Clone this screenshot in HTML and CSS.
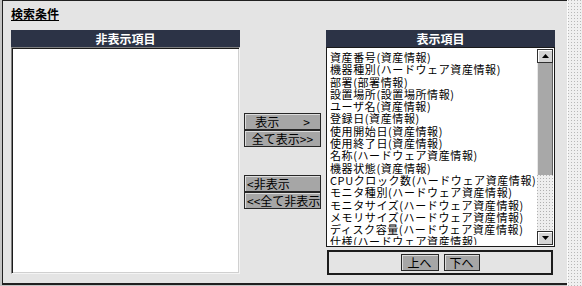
FILE: index.html
```html
<!DOCTYPE html>
<html>
  <head>
    <meta charset="UTF-8" />
    <title>検索条件</title>
    <link rel="stylesheet" href="styles.css">
  </head>
  <body>
    <div class="frame">
      <div class="title">検索条件</div>

      <div class="panels">
        <div class="panel">
          <div class="panel-head">非表示項目</div>
          <div class="listbox hidden-list"></div>
        </div>

        <div class="moves">
          <button class="btn move">表示　　&gt;</button>
          <button class="btn move">全て表示&gt;&gt;</button>
          <button class="btn move back first-back">&lt;非表示</button>
          <button class="btn move back">&lt;&lt;全て非表示</button>
        </div>

        <div class="panel">
          <div class="panel-head">表示項目</div>
          <div class="listbox shown-list">
            <ul class="items">
              <li>資産番号(資産情報)</li>
              <li>機器種別(ハードウェア資産情報)</li>
              <li>部署(部署情報)</li>
              <li>設置場所(設置場所情報)</li>
              <li>ユーザ名(資産情報)</li>
              <li>登録日(資産情報)</li>
              <li>使用開始日(資産情報)</li>
              <li>使用終了日(資産情報)</li>
              <li>名称(ハードウェア資産情報)</li>
              <li>機器状態(資産情報)</li>
              <li>CPUクロック数(ハードウェア資産情報)</li>
              <li>モニタ種別(ハードウェア資産情報)</li>
              <li>モニタサイズ(ハードウェア資産情報)</li>
              <li>メモリサイズ(ハードウェア資産情報)</li>
              <li>ディスク容量(ハードウェア資産情報)</li>
              <li>仕様(ハードウェア資産情報)</li>
            </ul>
            <div class="scrollbar">
              <div class="sb-btn">
                <svg width="7" height="4" viewBox="0 0 7 4"><polygon points="3.5,0 7,4 0,4" fill="#000"/></svg>
              </div>
              <div class="sb-thumb"></div>
              <div class="sb-track"></div>
              <div class="sb-btn">
                <svg width="7" height="4" viewBox="0 0 7 4"><polygon points="0,0 7,0 3.5,4" fill="#000"/></svg>
              </div>
            </div>
          </div>
          <div class="order-bar">
            <button class="btn order up">上へ</button>
            <button class="btn order">下へ</button>
          </div>
        </div>
      </div>
    </div>

    <div class="side"></div>
  </body>
</html>
```

FILE: styles.css
```css
body {
  margin: 0;
  display: flex;
  height: 286px;
  overflow: hidden;
  background-color: #c4c4c4;
  font-family: "Noto Sans CJK JP", sans-serif;
  font-size: 12px;
  color: #000;
}

.frame {
  flex: 1;
  height: 285px;
  box-sizing: border-box;
  margin-left: 2px;
  padding: 6px 0 0 8px;
  background-color: #e4e4e4;
  border-top: 1px solid #202020;
  border-left: 1px solid #202020;
  border-bottom: 2px solid #202020;
}

.side {
  width: 14px;
  border-left: 1px solid #fafafa;
  background: conic-gradient(at 1px 1px, transparent 75%, #b8b8b8 0) 0 0 / 3px 3px,
    #f0f0f0;
}

.title {
  font-weight: bold;
  text-decoration: underline;
  line-height: 14px;
  margin-bottom: 9px;
}

.panels {
  display: flex;
}

.panel {
  width: 229px;
  display: flex;
  flex-direction: column;
}

.panel-head {
  height: 17px;
  line-height: 17px;
  background-color: #2c3346;
  color: #fff;
  font-weight: bold;
  text-align: center;
}

.listbox {
  box-sizing: border-box;
  background-color: #fff;
  border: 1px solid;
  border-color: #808080 #f4f4f4 #f4f4f4 #808080;
  box-shadow: inset 1px 1px #1a1a1a, inset -1px -1px #d0d0d0;
}

.hidden-list {
  height: 227px;
}

.shown-list {
  height: 200px;
  display: flex;
  padding: 1px;
  border-color: #1a1a1a;
  box-shadow: none;
}

.items {
  flex: 1;
  margin: 0;
  padding: 2px 2px 0 2px;
  list-style: none;
  overflow: hidden;
  white-space: nowrap;
  font-size: 11px;
  line-height: 12.3px;
  letter-spacing: 0.6px;
}

.scrollbar {
  width: 16px;
  display: flex;
  flex-direction: column;
}

.sb-btn {
  height: 14px;
  box-sizing: border-box;
  display: flex;
  align-items: center;
  justify-content: center;
  background-color: #d4d4d4;
  border: 1px solid #303030;
  box-shadow: inset 1px 1px #fff;
}

.sb-thumb {
  height: 112px;
  background-color: #a8a8a8;
  border-left: 1px solid #e8e8e8;
  border-right: 1px solid #606060;
}

.sb-track {
  flex: 1;
  background: conic-gradient(at 1px 1px, transparent 75%, #b0b0b0 0) 0 0 / 3px 3px,
    #eeeeee;
}

.moves {
  width: 77px;
  margin: 0 5px 0 4px;
  padding-top: 83px;
  display: flex;
  flex-direction: column;
}

.btn {
  height: 17px;
  padding: 0;
  font-family: inherit;
  font-size: 12px;
  line-height: 15px;
  color: #000;
  white-space: pre;
  background-color: #a6a6a6;
  border: 1px solid #262626;
  box-shadow: inset 1px 1px #dcdcdc;
}

.move.back {
  text-align: left;
  padding-left: 2px;
}

.first-back {
  margin-top: 28px;
}

.order-bar {
  height: 25px;
  box-sizing: border-box;
  margin: 3px 2px 0 1px;
  border: 2px solid #1c1c1c;
  display: flex;
  justify-content: center;
  align-items: center;
  gap: 5px;
}

.order {
  width: 36px;
}

.order.up {
  width: 38px;
}
```
